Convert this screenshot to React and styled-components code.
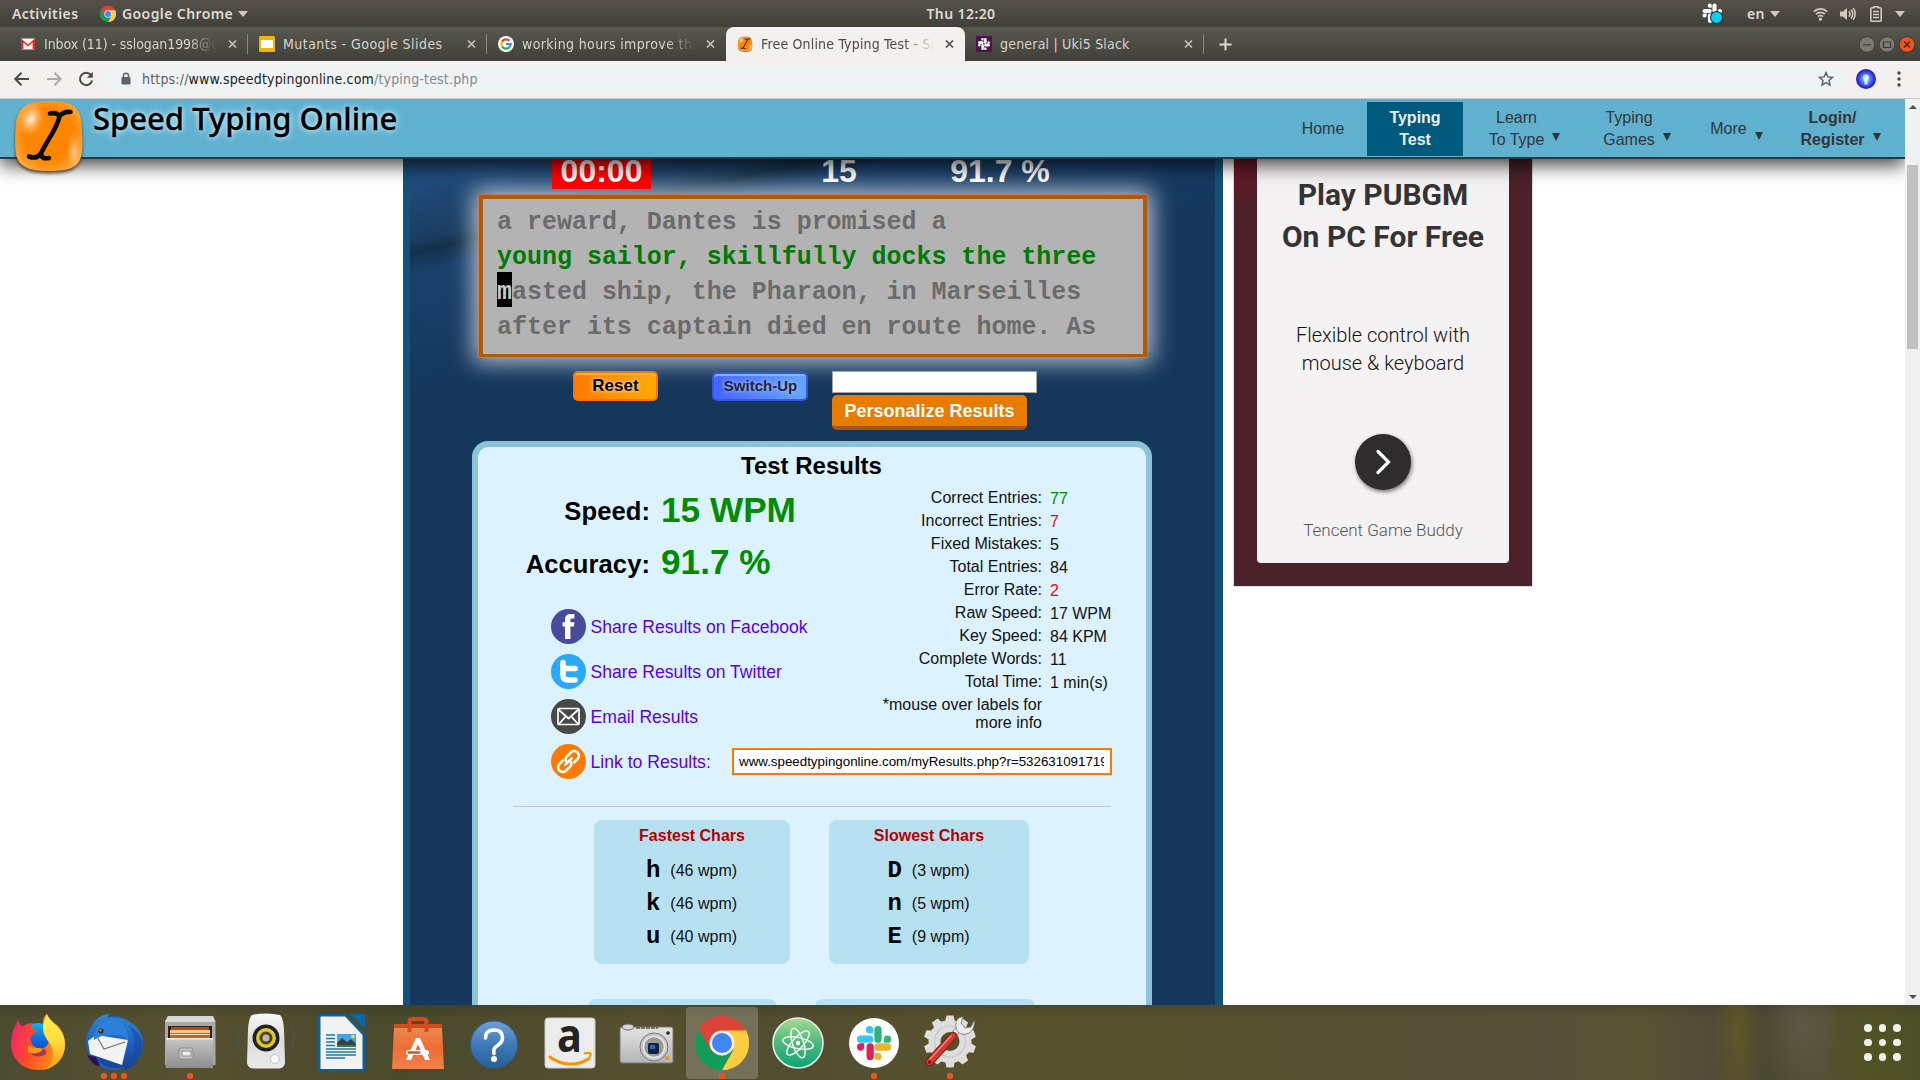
import React from "react";
import styled, { createGlobalStyle, css } from "styled-components";

const sans = `"Liberation Sans", Arial, sans-serif`;
const mono = `"Liberation Mono", "Courier New", monospace`;
const shell = `"DejaVu Sans Condensed", "DejaVu Sans", "Noto Sans", sans-serif`;

const GlobalStyle = createGlobalStyle`
  * { box-sizing: border-box; }
  body { margin: 0; overflow: hidden; background: #fff; font-family: ${sans}; }
  svg { display: block; flex: none; }
`;

const Desktop = styled.div`
  width: 1920px;
  height: 1080px;
  display: flex;
  flex-direction: column;
  overflow: hidden;
`;

/* ---------- shell bar ---------- */
const TopBar = styled.header`
  height: 27px;
  flex: none;
  display: grid;
  grid-template-columns: 1fr auto 1fr;
  align-items: center;
  background: linear-gradient(#56524b, #403f39);
  color: #dfdbd2;
  font: 600 14px/28px "Noto Sans", sans-serif;
`;
const BarLeft = styled.div`
  display: flex;
  align-items: center;
  padding-left: 12px;
`;
const BarText = styled.span`
  display: block;
  width: ${(p) => p.$w}px;
  white-space: nowrap;
  letter-spacing: 0.4px;
`;
const BarRight = styled.div`
  display: flex;
  align-items: center;
  justify-content: flex-end;
  padding-right: 15px;
`;
const Space = styled.i`
  width: ${(p) => p.$w}px;
  flex: none;
`;

/* ---------- tab strip ---------- */
const TabStrip = styled.nav`
  height: 34px;
  flex: none;
  display: flex;
  align-items: stretch;
  padding: 0 5px 0 9px;
  background: linear-gradient(#59584f, #403f39);
`;
const Tab = styled.div`
  width: 239px;
  flex: none;
  display: flex;
  align-items: center;
  padding: 0 9px 0 11px;
  gap: 8px;
  color: #d6d3ca;
  border-radius: 8px 8px 0 0;
  ${(p) =>
    p.$active &&
    css`
      background: #f2f1f0;
      color: #4a4a46;
    `}
`;
const TabTitle = styled.span`
  width: 175px;
  margin-right: 1px;
  flex: none;
  overflow: hidden;
  white-space: nowrap;
  font: 14px/34px ${shell};
  letter-spacing: ${(p) => p.$ls}px;
  ${(p) =>
    p.$fade &&
    css`
      mask-image: linear-gradient(90deg, #000 82%, transparent 99%);
    `}
`;
const Divider = styled.i`
  width: 1px;
  height: 20px;
  margin: 7px 0 0 -1px;
  background: #8a8880;
  flex: none;
`;
const WindowControls = styled.div`
  margin-left: auto;
  display: flex;
  align-items: center;
  gap: 4px;
`;
const NewTab = styled.div`
  display: flex;
  align-items: center;
  padding-left: 15px;
`;

/* ---------- address bar ---------- */
const Toolbar = styled.div`
  height: 38px;
  flex: none;
  display: flex;
  align-items: center;
  padding: 0 15px 2px 13px;
  background: #f2f1f0;
  border-bottom: 1px solid #c8c8c8;
`;
const Omnibox = styled.div`
  width: 1738px;
  flex: none;
  height: 28px;
  margin-left: 13px;
  border-radius: 14px;
  background: #eff3f4;
  display: flex;
  align-items: center;
  padding: 0 11px 0 13px;
`;
const Url = styled.span`
  margin-left: 10px;
  flex: 1;
  font: 14px/28px ${shell};
  letter-spacing: 0.18px;
  color: #5d6063;
  b { font-weight: 400; color: #202124; }
  i { font-style: normal; color: #85888c; }
`;

/* ---------- page ---------- */
const Viewport = styled.div`
  flex: 1;
  min-height: 0;
  display: flex;
  overflow: hidden;
  background: #fff;
`;
const Page = styled.div`
  width: 1905px;
  height: 906px;
  overflow: hidden;
  display: flex;
  flex-direction: column;
`;
const SiteHeader = styled.div`
  height: 60px;
  flex: none;
  position: relative;
  z-index: 2;
  display: flex;
  background: #60b0d0;
  border-bottom: 2px solid #333638;
  box-shadow: 0 6px 18px rgba(0, 0, 0, 0.75);
`;
const Brand = styled.div`
  display: flex;
  align-items: flex-start;
  padding-left: 10px;
  height: 58px;
`;
const BrandName = styled.span`
  margin: 0 0 0 6px;
  font: 500 31px/38px "Noto Sans", "Open Sans", sans-serif;
  color: #000;
  white-space: nowrap;
  -webkit-text-stroke: 0.3px #000;
  text-shadow: 0 0 5px #d6f1fb, 0 0 8px #b4e0f0;
`;
const Nav = styled.div`
  margin-left: auto;
  display: flex;
  padding: 3px 9px 0 0;
`;
const NavItem = styled.div`
  height: 54px;
  width: ${(p) => p.$w}px;
  display: flex;
  align-items: center;
  justify-content: center;
  gap: 8px;
  text-align: center;
  font-size: 16px;
  line-height: 22px;
  white-space: pre;
  color: #333638;
  font-weight: ${(p) => (p.$bold ? 700 : 400)};
  ${(p) =>
    p.$active &&
    css`
      background: #005a7d;
      color: #e9edef;
    `}
`;
const Caret = styled.i`
  width: 0;
  height: 0;
  border: 4px solid transparent;
  border-width: 8px 4px 0;
  border-top-color: #333638;
  margin-top: ${(p) => p.$mt}px;
`;
const Content = styled.div`
  flex: 1;
  min-height: 0;
  display: flex;
  align-items: flex-start;
  padding-left: 403px;
`;
const Main = styled.main`
  width: 820px;
  height: 846px;
  overflow: hidden;
  border: solid #12527a;
  border-width: 0 8px 0 7px;
  background:
    linear-gradient(167deg, rgba(36, 82, 135, 0.75) 0 24px, rgba(28, 62, 98, 0.85) 80px, rgba(20, 48, 72, 0.9) 92px, rgba(28, 68, 115, 0.65) 112px, rgba(21, 55, 92, 0) 230px),
    #15375c;
`;
const Scores = styled.div`
  height: 30px;
  display: flex;
  align-items: flex-end;
  padding-left: 142px;
  overflow: hidden;
`;
const Score = styled.div`
  width: ${(p) => p.$w}px;
  margin-left: ${(p) => p.$ml || 0}px;
  flex: none;
  text-align: center;
  font: 700 32px/36px ${sans};
  color: #fff;
  background: ${(p) => p.$bg || "none"};
`;
const TypingBox = styled.div`
  margin: 6px 0 0 69px;
  width: 668px;
  height: 162px;
  padding: 6px 14px;
  border: 4px solid #b35900;
  border-bottom-width: 3px;
  background: #b3b3b3;
  box-shadow: 0 0 0 1px rgba(240, 110, 30, 0.5), 0 1px 0 0 #f77a20,
    0 0 22px 5px rgba(225, 235, 245, 0.8);
`;
const TypingLine = styled.div`
  height: 35px;
  font: 700 25px/35px ${mono};
  letter-spacing: -0.02px;
  white-space: pre;
  color: ${(p) => (p.$done ? "#007a00" : "#6b6b6b")};
`;
const Cursor = styled.span`
  background: #000;
  color: #c9c9c9;
  padding-top: 6px;
`;
const Controls = styled.div`
  display: flex;
  align-items: flex-start;
  height: 70px;
  margin-top: 14px;
  padding-left: 163px;
`;
const ResetButton = styled.button`
  width: 85px;
  height: 30px;
  padding: 0 0 1px;
  border: 2px solid #ff7200;
  border-radius: 5px;
  background: linear-gradient(90deg, #ff7a00, #ffab00);
  box-shadow: inset 0 2px 1px #ffb565;
  font: 700 17px/24px ${sans};
  color: #000;
  text-shadow: 0 0 5px #ffd9a0, 0 0 3px #ffd08a;
`;
const SwitchButton = styled.button`
  width: 96px;
  height: 29px;
  margin: 1px 0 0 54px;
  padding: 0 0 1px 1px;
  border: 2px solid #3657d8;
  border-radius: 5px;
  background: linear-gradient(90deg, #4663ff, #66a6ff);
  box-shadow: inset 0 2px 1px #83b9ff;
  font: 700 15px/24px ${sans};
  color: #22262e;
  text-shadow: 0 0 5px #b9d4ff;
`;
const NameForm = styled.div`
  display: flex;
  flex-direction: column;
  gap: 2px;
  margin-left: 24px;
`;
const NameInput = styled.input`
  width: 205px;
  height: 22px;
  border: 1px solid #a6a6a6;
  background: #fff;
  padding: 0;
`;
const PersonalizeButton = styled.button`
  width: 195px;
  height: 35px;
  border: 0;
  border-bottom: 4px solid #a8560c;
  border-radius: 5px;
  padding: 1px 0 0;
  background: #e77c00;
  color: #fff;
  font: 700 18px/30px ${sans};
`;
const Results = styled.section`
  width: 680px;
  height: 620px;
  margin-left: 62px;
  border: 6px solid #8bc3d9;
  border-bottom: 0;
  border-radius: 16px 16px 0 0;
  background: #dcf3ff;
  padding-top: 4px;
`;
const ResultsTitle = styled.h2`
  margin: 0;
  padding-right: 1px;
  text-align: center;
  font: 700 24px/30px ${sans};
  color: #000;
`;
const Columns = styled.div`
  display: flex;
  height: 258px;
`;
const LeftColumn = styled.div`
  width: 395px;
  padding-top: 3px;
`;
const BigRow = styled.div`
  height: 52px;
  display: flex;
  gap: 11px;
  font: 700 25.6px/${(p) => p.$lh}px ${sans};
  color: #000;
`;
const BigLabel = styled.span`
  width: 172px;
  text-align: right;
  letter-spacing: 0.05px;
`;
const BigValue = styled.span`
  font-size: 35.2px;
  line-height: 52px;
  color: #008c00;
`;
const ShareList = styled.div`
  margin-top: 16px;
`;
const ShareRow = styled.div`
  height: 45px;
  padding-left: 73px;
  display: flex;
  align-items: center;
  gap: 4px;
`;
const ShareLink = styled.a`
  width: ${(p) => (p.$w ? p.$w + "px" : "auto")};
  height: 45px;
  padding-left: 0.5px;
  font: 17.6px/47px ${sans};
  color: #5a00ee;
  white-space: nowrap;
`;
const LinkInput = styled.div`
  margin-left: -4px;
  width: 380px;
  height: 27px;
  border: 2px solid #ff7800;
  background: #fff;
  padding: 0 6px 0 5px;
  span {
    display: block;
    overflow: hidden;
    white-space: nowrap;
    font: 13.333px/23px ${sans};
    color: #000;
  }
`;
const StatTable = styled.div`
  padding-top: 5px;
`;
const StatRow = styled.div`
  display: flex;
  height: 23px;
  font: 16px/23px ${sans};
  color: #111;
`;
const StatLabel = styled.span`
  width: 169px;
  text-align: right;
`;
const StatValue = styled.span`
  margin-left: 8px;
  line-height: 25px;
  color: ${(p) => p.$color || "#111"};
`;
const Note = styled.div`
  width: 165px;
  margin: 3px 0 0 5px;
  padding-right: 1px;
  text-align: right;
  font: 16px/18px ${sans};
  color: #111;
`;
const Rule = styled.div`
  height: 1px;
  margin: 22px 35px 13px;
  background: #c3c3c6;
`;
const Cards = styled.div`
  display: flex;
  gap: ${(p) => p.$gap}px;
  padding-left: ${(p) => p.$pl}px;
  margin-bottom: 35px;
`;
const Card = styled.div`
  width: ${(p) => p.$w}px;
  height: 144px;
  padding-top: 6px;
  border-radius: 8px;
  background: #b7e1f1;
`;
const CardTitle = styled.div`
  margin-bottom: 8px;
  text-align: center;
  font: 700 16px/20px ${sans};
  color: #b80000;
`;
const CharRow = styled.div`
  height: 33px;
  display: flex;
  justify-content: center;
  gap: 10px;
  padding-right: 1px;
  font: 16px/33px ${sans};
  color: #111;
  b { font: 700 24px/33px ${mono}; color: #000; }
`;

/* ---------- advert ---------- */
const Advert = styled.aside`
  width: 298px;
  height: 427px;
  margin-left: 11px;
  padding: 0 23px;
  background: radial-gradient(ellipse 40px 55px at 0 0, rgba(120, 18, 38, 0.85), rgba(75, 33, 42, 0)), #4b212a;
  box-shadow: 0 0 0 1px #dcdcdc;
`;
const AdCard = styled.div`
  height: 404px;
  border-radius: 0 0 4px 4px;
  background: #f4f2f3;
  font-family: Roboto, sans-serif;
  text-align: center;
  display: flex;
  flex-direction: column;
  align-items: center;
`;
const AdTitle = styled.div`
  padding-top: 15px;
  font-size: 30px;
  line-height: 42px;
  font-weight: 700;
  color: #353334;
  white-space: pre;
`;
const AdText = styled.div`
  margin-top: 63px;
  font-size: 20px;
  line-height: 28px;
  font-weight: 300;
  color: #111;
  white-space: pre;
`;
const AdButton = styled.div`
  margin-top: 57px;
  width: 56px;
  height: 56px;
  flex: none;
  border-radius: 50%;
  background: #2f2c2d;
  box-shadow: 1px 2px 4px rgba(0, 0, 0, 0.55);
  display: flex;
  align-items: center;
  justify-content: center;
`;
const AdBrand = styled.div`
  margin-top: 30px;
  font-size: 17px;
  line-height: 20px;
  font-weight: 300;
  color: #555;
`;

/* ---------- scrollbar ---------- */
const Scrollbar = styled.div`
  width: 15px;
  height: 906px;
  background: #f1f1f1;
  display: flex;
  flex-direction: column;
  align-items: center;
`;
const ScrollArrow = styled.i`
  width: 0;
  height: 0;
  border: 4px solid transparent;
  ${(p) =>
    p.$up
      ? css`border-top-width: 0; border-bottom-color: #505050; margin: 6px 0 56px;`
      : css`border-bottom-width: 0; border-top-color: #505050; margin: auto 0 6px;`}
`;
const Thumb = styled.div`
  width: 11px;
  height: 184px;
  background: #c1c1c1;
`;

/* ---------- dock ---------- */
const Dock = styled.footer`
  height: 75px;
  flex: none;
  display: flex;
  background:
    radial-gradient(ellipse 26px 120px at 1738px 30px, rgba(98, 88, 36, 0.8), transparent),
    radial-gradient(ellipse 40px 70px at 1800px 20px, rgba(98, 92, 76, 0.7), transparent),
    radial-gradient(ellipse 70px 120px at 1880px 50px, rgba(80, 84, 30, 0.8), transparent),
    linear-gradient(rgba(0, 0, 0, 0.12), transparent 14px),
    linear-gradient(90deg, #4b4b30 0, #56512f 180px, #49492c 400px, #55502f 640px, #514d30 760px, #57512d 1000px, #58512f 1200px, #57503a 1540px, #595433 1640px, #544b3a 1710px, #494832 1770px, #565039 1820px, #4b4d2a);
`;
const DockItem = styled.div`
  width: 76px;
  height: 75px;
  flex: none;
`;
const AppGrid = styled.div`
  margin: 0 19.5px 0 auto;
  display: grid;
  grid-template-columns: repeat(3, 7.5px);
  gap: 7px;
  align-content: center;
  i { height: 7.5px; border-radius: 50%; background: #f1f1ee; }
`;

/* ---------- drawings ---------- */
const ChromeMark = ({ size }) => (
  <svg width={size} height={size} viewBox="0 0 54 54">
    <path d="M3.6 13.5A27 27 0 0 1 50.4 13.5L46 22 27 27Z" fill="#db4437" />
    <path d="M50.4 13.5A27 27 0 0 1 27 54L38.7 33.7 27 14.5 50 14.500Z" fill="#ffcd40" />
    <path d="M3.6 13.5 15.4 33.7 20 20 50.4 14.5V13.5A27 27 0 0 0 3.6 13.5Z" fill="#db4437" />
    <path d="M50.900 14.500 30 14.500 40 30 38.700 33.700 27 54A27 27 0 0 0 50.900 14.500Z" fill="#ffcd40" />
    <path d="M3.6 13.5 15.4 33.7A13.4 13.4 0 0 0 27 40.4L38 34 27 54A27 27 0 0 1 3.6 13.5Z" fill="#0f9d58" />
    <circle cx="27" cy="27" r="12.5" fill="#f1f1f1" />
    <circle cx="27" cy="27" r="10" fill="#4285f4" />
  </svg>
);

const SlackBars = ({ c }) => (
  <g>
    <path d="M9 0a2.6 2.6 0 0 0 0 5.2h2.6V2.6A2.6 2.6 0 0 0 9 0ZM2.6 6.8h6.4a2.6 2.6 0 0 1 0 5.2H2.6a2.6 2.6 0 0 1 0-5.2Z" fill={c[0]} />
    <path d="M24.4 9.4a2.6 2.6 0 1 0-5.2 0V12h2.6a2.6 2.6 0 0 0 2.6-2.6ZM17.6 9.4V2.6a2.6 2.6 0 0 0-5.2 0v6.8a2.6 2.6 0 0 0 5.2 0Z" fill={c[1]} />
    <path d="M15 24.4a2.6 2.6 0 0 0 0-5.2h-2.6v2.6a2.6 2.6 0 0 0 2.6 2.6ZM15 17.6h6.8a2.6 2.6 0 0 0 0-5.2H15a2.6 2.6 0 0 0 0 5.2Z" fill={c[2]} />
    <path d="M0 15a2.6 2.6 0 0 0 5.2 0v-2.6H2.6A2.6 2.6 0 0 0 0 15ZM6.8 15v6.8a2.6 2.6 0 0 0 5.2 0V15a2.6 2.6 0 0 0-5.2 0Z" fill={c[3]} />
  </g>
);

const DownArrow = () => (
  <svg width="10" height="6" viewBox="0 0 10 6"><path d="M0 0h10L5 6Z" fill="#cfcbc2" /></svg>
);

const TrayIcons = () => (
  <>
    <svg width="22" height="24" viewBox="0 0 22 24">
      <g transform="translate(.5 1.500) scale(.8)"><SlackBars c={["#fff", "#fff", "#fff", "#fff"]} /></g>
      <circle cx="14.500" cy="15.500" r="6" fill="#00d0f5" stroke="#101010" strokeWidth="1" />
    </svg>
    <Space $w={23} />
    <BarText $w={22}>en</BarText>
    <Space $w={1} />
    <DownArrow />
    <Space $w={33} />
    <svg width="15" height="14" viewBox="0 0 15 14" fill="none" stroke="#cfcbc2" strokeWidth="1.8">
      <path d="M.8 4.6a9.5 9.5 0 0 1 13.4 0M3 7.2a6.4 6.4 0 0 1 9 0M5.1 9.6a3.4 3.4 0 0 1 4.8 0" />
      <circle cx="7.5" cy="12.2" r="1.6" fill="#cfcbc2" stroke="none" />
    </svg>
    <Space $w={12} />
    <svg width="16" height="14" viewBox="0 0 16 14" fill="none" stroke="#cfcbc2" strokeWidth="1.5">
      <path d="M0 4.5h3L7 1v12L3 9.5H0Z" fill="#cfcbc2" stroke="none" />
      <path d="M9 4.3a4.5 4.5 0 0 1 0 5.4M11 2.6a7 7 0 0 1 0 8.8M13 .9a9.6 9.6 0 0 1 0 12.2" />
    </svg>
    <Space $w={14} />
    <svg width="12" height="16" viewBox="0 0 12 16" fill="none" stroke="#cfcbc2" strokeWidth="1.6">
      <path d="M4 1.8V.8h4v1h2.2a1 1 0 0 1 1 1v11.4a1 1 0 0 1-1 1H1.8a1 1 0 0 1-1-1V2.8a1 1 0 0 1 1-1ZM3 5.5h6M3 8.5h6M3 11.5h6" />
    </svg>
    <Space $w={13} />
    <DownArrow />
  </>
);

const BeamLogo = ({ w, h, id }) => (
  <svg width={w} height={h} viewBox="0 0 75 80" overflow="visible">
    <defs>
      <radialGradient id={id} cx="50%" cy="48%" r="62%">
        <stop offset="0" stopColor="#ff8a00" />
        <stop offset=".6" stopColor="#ff8400" />
        <stop offset="1" stopColor="#ffb14a" />
      </radialGradient>
      <radialGradient id={id + "s"}>
        <stop offset="0" stopColor="#fff" stopOpacity=".9" />
        <stop offset="1" stopColor="#ffc070" stopOpacity="0" />
      </radialGradient>
      <filter id={id + "b"} x="-20%" y="-20%" width="140%" height="140%"><feGaussianBlur stdDeviation="1.6" /></filter>
    </defs>
    <path d="M38 4C58 3 69 8 70.500 26 71 36 72 46 71 55 69 71 58 74 38 74 18 74 6 70 4.500 54 4 44 4 34 5 26 7 9 18 4 38 4Z" fill="#2a1a08" opacity=".7" transform="translate(0 .5)" filter={`url(#${id}b)`} />
    <path d="M38 2C58 1 69 6 70.500 24 71 34 72 44 71 53 69 69 58 72 38 72 18 72 6 68 4.500 52 4 42 4 32 5 24 7 7 18 2 38 2Z" fill={`url(#${id})`} />
    <ellipse cx="20" cy="20" rx="13" ry="18" fill={`url(#${id}s)`} transform="rotate(20 20 20)" />
    <ellipse cx="63" cy="52" rx="8" ry="20" fill={`url(#${id}s)`} opacity=".6" />
    <path d="M39 14.500c5-1 8 0 9.500 3 2-3 6-5 11-4.500M18 57.500c5 2 9 1 12-3 0 4 3 5.500 8 4.500M48.500 17.500C46 30 36 41 30 54.500" fill="none" stroke="#0b0a06" strokeWidth="4.600" strokeLinecap="round" />
  </svg>
);

const CloseX = ({ c }) => (
  <svg width="10" height="10" viewBox="0 0 10 10"><path d="M1 1.500l7 7M8 1.500l-7 7" stroke={c} strokeWidth="1.700" /></svg>
);

const GmailIcon = () => (
  <svg width="16" height="16" viewBox="0 0 16 16">
    <path d="M1 2.500h14v11H1Z" fill="#f2f2f2" />
    <path d="M1 13.500V2.500L8 8.500l7-6v11h-2.400V6.500L8 10.500 3.400 6.500v7Z" fill="#d93025" />
  </svg>
);
const SlidesIcon = () => (
  <svg width="16" height="16" viewBox="0 0 16 16"><rect width="16" height="16" rx="1.500" fill="#f4b400" /><rect x="2" y="4" width="12" height="8" fill="#fff" /></svg>
);
const GoogleIcon = () => (
  <svg width="16" height="16" viewBox="0 0 16 16">
    <circle cx="8" cy="8" r="8" fill="#fff" />
    <g fill="none" strokeWidth="2.200">
      <path d="M11.300 4.700A4.700 4.700 0 0 0 4 5.600" stroke="#ea4335" />
      <path d="M4 5.600a4.700 4.700 0 0 0 0 4.800" stroke="#fbbc05" />
      <path d="M4 10.400a4.700 4.700 0 0 0 7.200 1" stroke="#34a853" />
      <path d="M11.200 11.400A4.600 4.600 0 0 0 12.700 8H8" stroke="#4285f4" />
    </g>
  </svg>
);
const SlackTabIcon = () => (
  <svg width="16" height="16" viewBox="0 0 16 16">
    <rect width="16" height="16" fill="#4a154b" />
    <g transform="translate(2 2) scale(.49)"><SlackBars c={["#fff", "#fff", "#fff", "#fff"]} /></g>
  </svg>
);

const WindowButton = ({ kind }) => (
  <svg width="16" height="17" viewBox="0 0 16 17">
    <circle cx="8" cy="8.500" r="7.800" fill={kind === "close" ? "#ee5426" : "#7b7a72"} stroke="#33322d" strokeWidth=".8" />
    {kind === "min" && <path d="M4 8.800h8" stroke="#3c3b37" strokeWidth="1.200" />}
    {kind === "max" && <path d="M4.500 6h7v5.500h-7Z" fill="none" stroke="#3c3b37" strokeWidth="1.200" />}
    {kind === "close" && <path d="M5 5.500l6 6M11 5.500l-6 6" stroke="#4a1c0c" strokeWidth="1.200" />}
  </svg>
);

const ArrowIcon = ({ back }) => (
  <svg width="18" height="16" viewBox="0 0 18 16" fill="none" stroke={back ? "#4a4a4a" : "#a9a9a7"} strokeWidth="2">
    {back ? <path d="M16 8H3M8.500 1.700 2.300 8l6.200 6.300" /> : <path d="M2 8h13M9.500 1.700 15.700 8l-6.200 6.300" />}
  </svg>
);
const ReloadIcon = () => (
  <svg width="16" height="16" viewBox="0 0 16 16"><path d="M13 4A6.200 6.200 0 1 0 14.200 9.500" fill="none" stroke="#4a4a4a" strokeWidth="2" /><path d="M14.800.8v6H8.800Z" fill="#4a4a4a" /></svg>
);
const LockIcon = () => (
  <svg width="12" height="14" viewBox="0 0 12 14"><rect x="1.500" y="5" width="9" height="7.500" rx="1" fill="#5f6368" /><path d="M3.500 5.500V3.700a2.500 2.500 0 0 1 5 0v1.800" fill="none" stroke="#5f6368" strokeWidth="1.400" /></svg>
);
const StarIcon = () => (
  <svg width="16" height="16" viewBox="0 0 16 16"><path d="M8 1.600l1.900 4.300 4.600.4-3.500 3.100 1 4.600L8 11.600 4 14l1-4.600L1.500 6.300l4.600-.4Z" fill="none" stroke="#5a5d60" strokeWidth="1.400" /></svg>
);
const BulbIcon = () => (
  <svg width="20" height="20" viewBox="0 0 20 20">
    <defs><radialGradient id="bulb"><stop offset="0" stopColor="#bfe3ff" /><stop offset=".5" stopColor="#4a78f5" /><stop offset=".8" stopColor="#3030e0" /><stop offset="1" stopColor="#2418a8" /></radialGradient></defs>
    <circle cx="10" cy="10" r="10" fill="url(#bulb)" />
    <path d="M8.500 12.500 7 8.500A3 3 0 0 1 13 8.500l-1.500 4v3h-3Z" fill="#e8f4ff" opacity=".85" />
  </svg>
);

const ShareIcon = ({ kind }) => {
  const fill = { fb: "#484a9b", tw: "#2aa9fa", mail: "#484848", link: "#ff7a00" }[kind];
  return (
    <svg width="35" height="35" viewBox="0 0 35 35">
      <circle cx="17.500" cy="17.500" r="17.500" fill={fill} />
      {kind === "fb" && <path d="M14 30V17.600h-2.400v-4.300H14V11c0-4 2-5.900 5.600-5.900h3.800v4.300h-2.200c-1.400 0-1.800.6-1.800 1.800v2.100h4l-.5 4.300h-3.500V30Z" fill="#fff" />}
      {kind === "tw" && <path d="M12 8.500V21q0 5 5 5H24M12 14.500H24" fill="none" stroke="#fff" strokeWidth="5.600" strokeLinecap="round" />}
      {kind === "mail" && <g fill="none" stroke="#fff" strokeWidth="1.700" strokeLinejoin="round"><rect x="7" y="9.500" width="21" height="16" rx="1" /><path d="M7.500 10.500l10 9 10-9M8 25l6.800-7.600M27 25l-6.800-7.600" /></g>}
      {kind === "link" && (
        <g fill="none" stroke="#fff" strokeWidth="2.600" strokeLinecap="round" transform="rotate(-45 17.500 17.500)">
          <path d="M14 12.800H9.500a4.700 4.700 0 0 0 0 9.400H15q3 0 4.200-3.200" />
          <path d="M21 22.200h4.500a4.700 4.700 0 0 0 0-9.400H20q-3 0-4.200 3.200" />
          <path d="M13 17.500h9" />
        </g>
      )}
    </svg>
  );
};

const gearTeeth = Array.from({ length: 10 }, (_, i) => i * 36);

const dockDrawings = {
  firefox: (
    <g>
      <circle cx="38" cy="38" r="20" fill="url(#ffBlue)" />
      <path d="M18 15c1 3 2 5 4 6 4-2 8-3 11-3-3 3-2 6 4 7-1 4-6 5-7 8 2 4 1 6 4 8 5 5 13 3 15-5 1-8-4-12-6-17-1-5 1-8 4-10 1 6 7 9 9 14 0-2 0-3-1-5 7 6 10 13 10 21 0 16-12 26-27 26S11 54 11 39c0-9 3-16 7-24Z" fill="url(#ffFire)" />
      <path d="M47 9c2 7 14 12 17 24 4 16-6 30-22 32 12-6 13-16 9-24-3-6-8-10-8-18 0-6 2-11 4-14Z" fill="url(#ffGold)" />
      <path d="M28 40c4 4 10 2 15 4-3 5-10 7-15 3Z" fill="#ff980e" />
      <path d="M29 47c5 3 11 1 14-3 3 0 4 2 3 5-4 3-12 4-17-2Z" fill="#5a207a" opacity=".6" />
    </g>
  ),
  thunderbird: (
    <g>
      <circle cx="37" cy="38" r="27" fill="#1f5fbd" />
      <path d="M15 22C20 12 27 9 34 9c-2 2-3 3-3 4 18-4 38 9 36 28-1 11-8 22-20 25l2-4c-10 3-22 0-27-7L13 46C8 38 10 29 15 22Z" fill="url(#tbBlue)" />
      <path d="M11 50c5 8 7 11 13 11l-4-9Z" fill="#2d0f55" />
      <path d="M20 30 52 35 46 60 14 49 12 36Z" fill="#f3f3f3" />
      <path d="M20 30 28 44 49 37" fill="none" stroke="#77736e" strokeWidth="1.200" />
      <path d="M18 31c2-12 12-17 22-15 8 2 13 8 12 20-3-6-10-7-18-6-6 0-10 1-16 5Z" fill="#2f7fda" />
      <circle cx="25" cy="26" r="2.600" fill="#33302a" /><circle cx="24.500" cy="25.500" r="1" fill="#e0b040" />
      <path d="M52 20c8 8 8 22 2 36l12-8c2-12-3-22-14-28Z" fill="#174b9b" opacity=".6" />
    </g>
  ),
  files: (
    <g>
      <path d="M16 11H61L63.500 16V60H13V16Z" fill="#a9a9a9" /><path d="M16 11H61L63 17H13Z" fill="#d8d8d8" />
      <rect x="16" y="21" width="44" height="14" fill="#2a221d" />
      <path d="M19 22h38v3H19Z" fill="#b84a12" /><path d="M18 25h40v3H18Z" fill="#f0c890" /><path d="M18 28h40v7H18Z" fill="#c5651b" /><path d="M18 29h40v1H18Z" fill="#f6e3c6" />
      <path d="M14 33H61V63H14Z" fill="url(#steel)" /><path d="M14 33H61v1.500H14Z" fill="#f0f0f0" />
      <rect x="27" y="43" width="14" height="11" rx="2" fill="#c9c9c9" stroke="#8a8a8a" /><rect x="30" y="46" width="9" height="5" fill="#ededed" stroke="#777" strokeWidth=".8" />
    </g>
  ),
  speaker: (
    <g>
      <path d="M13 22q-6 11 0 24M63 22q6 11 0 24" fill="none" stroke="#41556a" strokeWidth="1.500" opacity=".8" />
      <path d="M24 10Q38 7 52 10q3 2 4 14l1 34q-1 5-6 5.500H25q-5-.5-6-5.500l1-34q1-12 4-14Z" fill="url(#shell)" />
      <circle cx="38" cy="33" r="13.500" fill="#1f2024" /><circle cx="38" cy="33" r="10" fill="#dfc72c" /><circle cx="38" cy="33" r="6.500" fill="#4b4413" /><circle cx="38" cy="33" r="3.600" fill="#b8b8b0" />
      <circle cx="47" cy="54" r="4.500" fill="#f8f8f8" stroke="#c6c6c6" />
    </g>
  ),
  writer: (
    <g>
      <path d="M17 9H42L61 29V64a2.500 2.500 0 0 1-2.500 2.500h-42A2.500 2.500 0 0 1 14 64V11.500A2.500 2.500 0 0 1 17 9Z" fill="#0a5f98" />
      <path d="M17 11.500H41L58.500 30V64H16.500V12Z" fill="#f2f2f2" /><path d="M46 9H61V24Z" fill="#0868a6" />
      <path d="M22 30h9M22 33.500h9M22 37h9M22 40.500h9M22 44h30M22 47h30M22 50h30M22 53h19" stroke="#1d78ae" strokeWidth="1.300" />
      <rect x="33" y="29" width="19" height="13" fill="#45a4dd" /><path d="M33 42V38l5-5 5 4 4-3 5 5v3Z" fill="#394146" /><path d="M33 42h19v-2H33Z" fill="#3f7b30" /><circle cx="49" cy="31.500" r="1.800" fill="#ffd83a" />
    </g>
  ),
  software: (
    <g>
      <path d="M14 22H62L64 64H12Z" fill="url(#bag)" />
      <path d="M14 19H62V23H14Z" fill="#cf4a1d" />
      <path d="M29.500 27V17q0-3 3-3h11q3 0 3 3V27" fill="none" stroke="#d8491c" strokeWidth="4" />
      <path d="M36 33h4L50 55H45L38 39 31 55H26Z" fill="#fff" />
      <rect x="26" y="45" width="23" height="5" rx="2.500" fill="#fff" /><rect x="27.500" y="46.200" width="13" height="2.600" rx="1.300" fill="#d84f20" />
    </g>
  ),
  help: (
    <g>
      <circle cx="38" cy="39.500" r="23.500" fill="url(#helpBlue)" stroke="#2a5f98" />
      <path d="M29.500 33q0-8 8.500-8t8.500 7.500q0 5-5 8t-3.500 8" fill="none" stroke="#fff" strokeWidth="3.600" strokeLinecap="round" />
      <circle cx="38" cy="54" r="3" fill="#fff" />
    </g>
  ),
  amazon: (
    <g>
      <rect x="13" y="13" width="50" height="50" rx="3" fill="#ececec" stroke="#c9c9c9" />
      <path d="M18 52c12 9 28 9 38 2" fill="none" stroke="#f79400" strokeWidth="3" strokeLinecap="round" />
      <path d="M52 48.500q6-1.500 6.500 0t-2.500 7" fill="none" stroke="#f79400" strokeWidth="2.200" />
      <text x="37.500" y="47" textAnchor="middle" fontFamily="'Open Sans', sans-serif" fontWeight="700" fontSize="46" textLength="25" lengthAdjust="spacingAndGlyphs" fill="#25221f">a</text>
    </g>
  ),
  camera: (
    <g>
      <rect x="12" y="22" width="53" height="36" rx="2" fill="url(#steel2)" stroke="#777" />
      <ellipse cx="20" cy="22" rx="6" ry="3" fill="#d7d7d7" stroke="#666" />
      <path d="M28 23h22" stroke="#555" strokeWidth="1.500" strokeDasharray="4 1" />
      <circle cx="46" cy="42" r="14" fill="#c9c9c9" stroke="#777" /><circle cx="46" cy="42" r="10.500" fill="#999" stroke="#e8e8e8" strokeWidth="1.500" />
      <rect x="40" y="38" width="11" height="11" rx="2" fill="#13233f" /><rect x="42" y="40" width="5" height="4" fill="#2b67b0" />
      <circle cx="60" cy="28" r="1.800" fill="#222" /><rect x="57" y="51" width="4" height="4" fill="#f09a20" />
    </g>
  ),
  chrome: <g transform="translate(11 11)"><ChromeMark size={54} /></g>,
  atom: (
    <g>
      <circle cx="38" cy="38" r="25" fill="url(#atomGreen)" stroke="#e8efe8" strokeWidth="1.600" />
      <g fill="none" stroke="#eefaf2" strokeWidth="1.500">
        <ellipse cx="38" cy="38" rx="15.500" ry="5.500" transform="rotate(12 38 38)" />
        <ellipse cx="38" cy="38" rx="15.500" ry="5.500" transform="rotate(72 38 38)" />
        <ellipse cx="38" cy="38" rx="15.500" ry="5.500" transform="rotate(-48 38 38)" />
      </g>
      <circle cx="38" cy="38" r="2.200" fill="#fff" />
    </g>
  ),
  slack: (
    <g>
      <circle cx="38" cy="38" r="25" fill="#fff" />
      <g transform="translate(21 21) scale(1.400)"><SlackBars c={["#36c5f0", "#2eb67d", "#ecb22e", "#e01e5a"]} /></g>
    </g>
  ),
  settings: (
    <g>
      {gearTeeth.map((a) => (
        <path key={a} d="M33 17 34.500 10.500H41.500L43 17Z" fill="#dedede" transform={`rotate(${a} 38 36.500)`} />
      ))}
      <circle cx="38" cy="36.500" r="15.500" fill="none" stroke="#dedede" strokeWidth="12" />
      <circle cx="38" cy="36.500" r="15.500" fill="none" stroke="#c8c8c8" strokeWidth="1.200" />
      <path d="M40 31 51 20" stroke="#8d8d8d" strokeWidth="6.500" />
      <path d="M40 31 51 20" stroke="#ececec" strokeWidth="5" />
      <path d="M44 22c-1-6 2-10 7-10l-2 6 4 5 6-1 3-6c1 6-2 12-8 13-6 1-9-2-10-7Z" fill="#ececec" stroke="#868686" strokeWidth=".9" />
      <path d="M17.500 57 41 31" stroke="#8c1b18" strokeWidth="8.500" strokeLinecap="round" />
      <path d="M17.500 57 41 31" stroke="#d23a31" strokeWidth="6.200" strokeLinecap="round" />
      <path d="M18 54 39 31" stroke="#ee8a7e" strokeWidth="1.400" strokeLinecap="round" />
      <circle cx="17.500" cy="57" r="1.500" fill="#5a100e" />
    </g>
  ),
};

const dockApps = [
  ["firefox", []], ["thunderbird", [28, 38, 48]], ["files", [38]], ["speaker", []], ["writer", []],
  ["software", []], ["help", []], ["amazon", []], ["camera", []], ["chrome", [38], true], ["atom", []],
  ["slack", [38]], ["settings", [38]],
];

const Gradient = ({ id, stops }) => (
  <linearGradient id={id} x1="0" y1="0" x2="0" y2="1">
    {stops.map((c, i) => <stop key={i} offset={i / (stops.length - 1)} stopColor={c} />)}
  </linearGradient>
);

const DockIcon = ({ name, dots, active }) => (
  <DockItem>
    <svg width="76" height="75" viewBox="0 0 76 75">
      <defs>
        {name === "firefox" && (
          <>
            <Gradient id="ffBlue" stops={["#12b4f4", "#0a5fd8", "#2b2a86"]} />
            <linearGradient id="ffFire" x1="0" y1=".3" x2="1" y2=".6"><stop offset="0" stopColor="#f0246c" /><stop offset=".4" stopColor="#ff4a2c" /><stop offset="1" stopColor="#ff9a0e" /></linearGradient>
            <Gradient id="ffGold" stops={["#fff44f", "#ffd93a", "#ff9a10"]} />
          </>
        )}
        {name === "thunderbird" && <Gradient id="tbBlue" stops={["#2c86cf", "#1f62c8", "#173f8c"]} />}
        {name === "files" && <Gradient id="steel" stops={["#c6c6c6", "#8e8e8e"]} />}
        {name === "speaker" && <Gradient id="shell" stops={["#f8f8f8", "#dcdcdc", "#e9e9e9"]} />}
        {name === "software" && <Gradient id="bag" stops={["#ea8a4f", "#ee6c33", "#f0824f"]} />}
        {name === "help" && <Gradient id="helpBlue" stops={["#6f9fd6", "#3f7ab8", "#275f98"]} />}
        {name === "camera" && <Gradient id="steel2" stops={["#e3e3e3", "#b5b5b5"]} />}
        {name === "atom" && <Gradient id="atomGreen" stops={["#a5dc92", "#4cb87c", "#0aa574"]} />}
      </defs>
      {active && <rect x="2" y="2" width="72" height="72" rx="4" fill="#fff" opacity=".2" />}
      {dockDrawings[name]}
      {dots.map((x) => <circle key={x} cx={x} cy="71" r="3.200" fill="#e95420" />)}
    </svg>
  </DockItem>
);

const tabs = [
  { icon: <GmailIcon />, title: "Inbox (11) - sslogan1998@gmail.com", fade: true, ls: -0.08 },
  { icon: <SlidesIcon />, title: "Mutants - Google Slides", ls: 0.45 },
  { icon: <GoogleIcon />, title: "working hours improve the", fade: true, ls: 0.35 },
  { icon: <BeamLogo w={16} h={17} id="tabLogo" />, title: "Free Online Typing Test - Speed", fade: true, active: true, ls: 0.18 },
  { icon: <SlackTabIcon />, title: "general | Uki5 Slack", ls: 0.2 },
];

const stats = [
  ["Correct Entries:", "77", "#008c00"],
  ["Incorrect Entries:", "7", "#ff0000"],
  ["Fixed Mistakes:", "5"],
  ["Total Entries:", "84"],
  ["Error Rate:", "2", "#ff0000"],
  ["Raw Speed:", "17 WPM"],
  ["Key Speed:", "84 KPM"],
  ["Complete Words:", "11"],
  ["Total Time:", "1 min(s)"],
];

const charCards = [
  { title: "Fastest Chars", w: 196, rows: [["h", 46], ["k", 46], ["u", 40]] },
  { title: "Slowest Chars", w: 200, rows: [["D", 3], ["n", 5], ["E", 9]] },
];

const navItems = [
  { label: "Home", w: 88 },
  { label: "Typing\nTest", w: 96, active: true, bold: true },
  { label: "Learn\nTo Type", w: 123, caret: 15 },
  { label: "Typing\nGames", w: 102, caret: 15 },
  { label: "More", w: 97, caret: 13 },
  { label: "Login/\nRegister", w: 111, caret: 15, bold: true },
];

export default function App() {
  return (
    <Desktop>
      <GlobalStyle />
      <TopBar>
        <BarLeft>
          <BarText $w={88}>Activities</BarText>
          <ChromeMark size={16} />
          <Space $w={6} />
          <BarText $w={116}>Google Chrome</BarText>
          <DownArrow />
        </BarLeft>
        <BarText $w={67}>Thu 12:20</BarText>
        <BarRight><TrayIcons /></BarRight>
      </TopBar>

      <TabStrip>
        {tabs.map((t, i) => (
          <React.Fragment key={t.title}>
            <Tab $active={t.active}>
              {t.icon}
              <TabTitle $fade={t.fade} $ls={t.ls}>{t.title}</TabTitle>
              <CloseX c={t.active ? "#4a4a46" : "#c4c1b8"} />
            </Tab>
            {(i < 2 || i === 4) && <Divider />}
          </React.Fragment>
        ))}
        <NewTab>
          <svg width="13" height="13" viewBox="0 0 13 13"><path d="M6.500.5v12M.5 6.500h12" stroke="#dedbd2" strokeWidth="2" /></svg>
        </NewTab>
        <WindowControls>
          <WindowButton kind="min" />
          <WindowButton kind="max" />
          <WindowButton kind="close" />
        </WindowControls>
      </TabStrip>

      <Toolbar>
        <ArrowIcon back />
        <Space $w={14} />
        <ArrowIcon />
        <Space $w={15} />
        <ReloadIcon />
        <Omnibox>
          <LockIcon />
          <Url>https://<b>www.speedtypingonline.com</b><i>/typing-test.php</i></Url>
          <StarIcon />
        </Omnibox>
        <Space $w={11} />
        <BulbIcon />
        <Space $w={20} />
        <svg width="6" height="16" viewBox="0 0 6 16" fill="#4a4a4a"><circle cx="3" cy="2" r="1.700" /><circle cx="3" cy="8" r="1.700" /><circle cx="3" cy="14" r="1.700" /></svg>
      </Toolbar>

      <Viewport>
        <Page>
          <SiteHeader>
            <Brand>
              <BeamLogo w={77} h={80} id="siteLogo" />
              <BrandName>Speed Typing Online</BrandName>
            </Brand>
            <Nav>
              {navItems.map((n) => (
                <NavItem key={n.label} $w={n.w} $active={n.active} $bold={n.bold}>
                  {n.label}
                  {n.caret && <Caret $mt={n.caret} />}
                </NavItem>
              ))}
            </Nav>
          </SiteHeader>

          <Content>
            <Main>
              <Scores>
                <Score $w={99} $bg="#ff0000">00:00</Score>
                <Score $w={100} $ml={138}>15</Score>
                <Score $w={120} $ml={51}>91.7 %</Score>
              </Scores>
              <TypingBox>
                <TypingLine>a reward, Dantes is promised a</TypingLine>
                <TypingLine $done>young sailor, skillfully docks the three</TypingLine>
                <TypingLine><Cursor>m</Cursor>asted ship, the Pharaon, in Marseilles</TypingLine>
                <TypingLine>after its captain died en route home. As</TypingLine>
              </TypingBox>
              <Controls>
                <ResetButton>Reset</ResetButton>
                <SwitchButton>Switch-Up</SwitchButton>
                <NameForm>
                  <NameInput />
                  <PersonalizeButton>Personalize Results</PersonalizeButton>
                </NameForm>
              </Controls>
              <Results>
                <ResultsTitle>Test Results</ResultsTitle>
                <Columns>
                  <LeftColumn>
                    <BigRow $lh={54}><BigLabel>Speed:</BigLabel><BigValue>15 WPM</BigValue></BigRow>
                    <BigRow $lh={56}><BigLabel>Accuracy:</BigLabel><BigValue>91.7 %</BigValue></BigRow>
                    <ShareList>
                      <ShareRow><ShareIcon kind="fb" /><ShareLink>Share Results on Facebook</ShareLink></ShareRow>
                      <ShareRow><ShareIcon kind="tw" /><ShareLink>Share Results on Twitter</ShareLink></ShareRow>
                      <ShareRow><ShareIcon kind="mail" /><ShareLink>Email Results</ShareLink></ShareRow>
                    </ShareList>
                  </LeftColumn>
                  <StatTable>
                    {stats.map(([label, value, color]) => (
                      <StatRow key={label}>
                        <StatLabel>{label}</StatLabel>
                        <StatValue $color={color}>{value}</StatValue>
                      </StatRow>
                    ))}
                    <Note>*mouse over labels for more info</Note>
                  </StatTable>
                </Columns>
                <ShareRow>
                  <ShareIcon kind="link" />
                  <ShareLink $w={142}>Link to Results:</ShareLink>
                  <LinkInput><span>www.speedtypingonline.com/myResults.php?r=532631091719</span></LinkInput>
                </ShareRow>
                <Rule />
                <Cards $pl={116} $gap={39}>
                  {charCards.map((c) => (
                    <Card key={c.title} $w={c.w}>
                      <CardTitle>{c.title}</CardTitle>
                      {c.rows.map(([ch, wpm]) => (
                        <CharRow key={ch}><b>{ch}</b><span>({wpm} wpm)</span></CharRow>
                      ))}
                    </Card>
                  ))}
                </Cards>
                <Cards $pl={110} $gap={38}>
                  <Card $w={189} />
                  <Card $w={220} />
                </Cards>
              </Results>
            </Main>

            <Advert>
              <AdCard>
                <AdTitle>{"Play PUBGM\nOn PC For Free"}</AdTitle>
                <AdText>{"Flexible control with\nmouse & keyboard"}</AdText>
                <AdButton>
                  <svg width="16" height="26" viewBox="0 0 16 26"><path d="M3 2.500 13.500 13 3 23.500" fill="none" stroke="#fff" strokeWidth="3.200" strokeLinecap="round" /></svg>
                </AdButton>
                <AdBrand>Tencent Game Buddy</AdBrand>
              </AdCard>
            </Advert>
          </Content>
        </Page>
        <Scrollbar>
          <ScrollArrow $up />
          <Thumb />
          <ScrollArrow />
        </Scrollbar>
      </Viewport>

      <Dock>
        {dockApps.map(([name, dots, active]) => (
          <DockIcon key={name} name={name} dots={dots} active={active} />
        ))}
        <AppGrid>
          {Array.from({ length: 9 }, (_, i) => <i key={i} />)}
        </AppGrid>
      </Dock>
    </Desktop>
  );
}
